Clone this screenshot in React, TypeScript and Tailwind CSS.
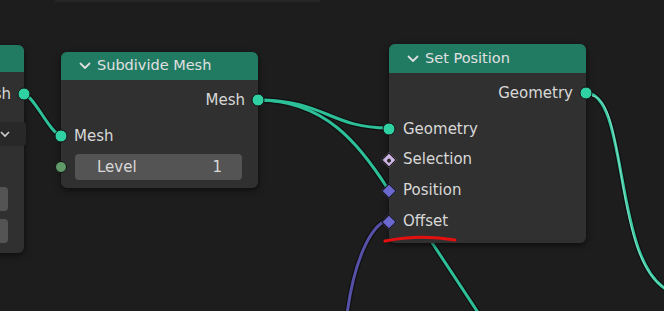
import React from "react";

const font = { fontFamily: '"DejaVu Sans", "Liberation Sans", sans-serif' };

function Circle({ side, color = "#2fd1a3", size = 13 }: { side: "l" | "r"; color?: string; size?: number }) {
  return (
    <span
      className={`absolute top-1/2 -translate-y-1/2 rounded-full border border-[#141414] ${side === "l" ? "-translate-x-1/2 left-0" : "translate-x-1/2 right-0"}`}
      style={{ width: size, height: size, background: color }}
    />
  );
}

function Diamond({ color, dot }: { color: string; dot?: boolean }) {
  return (
    <span className="absolute left-0 top-1/2 -translate-x-1/2 -translate-y-1/2 w-[11px] h-[11px] rotate-45 border border-[#141414] flex items-center justify-center" style={{ background: color }}>
      {dot && <span className="w-[4px] h-[4px] bg-[#2a2a2a] rounded-full" />}
    </span>
  );
}

function Chevron() {
  return (
    <svg width="12" height="8" viewBox="0 0 12 8" className="mr-[6px]">
      <path d="M1.5 1.5 L6 6 L10.5 1.5" fill="none" stroke="#dcdcdc" strokeWidth="1.8" strokeLinecap="round" strokeLinejoin="round" />
    </svg>
  );
}

function Header({ title, h }: { title: string; h: string }) {
  return (
    <div className={`${h} bg-[#217b63] rounded-t-[6px] flex items-center pl-[18px] text-[14.5px] text-[#e0e0e0]`}>
      <Chevron />
      <span>{title}</span>
    </div>
  );
}

export default function App() {
  return (
    <div className="relative w-[664px] h-[311px] overflow-hidden bg-[#1d1d1d]" style={font}>
      <div className="absolute left-[55px] top-0 w-[265px] h-[2px] bg-[#262626]" />
      {/* wires */}
      <svg className="absolute inset-0" width="664" height="311" viewBox="0 0 664 311">
        <g fill="none" stroke="#101010" strokeWidth="5.5" strokeLinecap="round">
          <path d="M24 94 C34 96 50 133 60 135" />
          <path d="M258 100 C325 100 330 128 388 128" />
          <path d="M258 100 C325 100 360 145 388 189" />
          <path d="M586 93 C630 93 612 270 672 292" />
          <path d="M425 232 L479 314" />
          <path d="M388 220 C370 225 354 262 347 314" />
        </g>
        <g fill="none" strokeWidth="3" strokeLinecap="round">
          <path d="M24 94 C34 96 50 133 60 135" stroke="#2dbf98" />
          <path d="M258 100 C325 100 330 128 388 128" stroke="#2dbf98" />
          <path d="M258 100 C325 100 360 145 388 189" stroke="#2dbf98" />
          <path d="M586 93 C630 93 612 270 672 292" stroke="#35c9a0" />
          <path d="M425 232 L479 314" stroke="#2dbf98" />
          <path d="M388 220 C370 225 354 262 347 314" stroke="#5651a6" />
        </g>
        <path d="M592 96 C628 100 612 262 668 290" fill="none" stroke="#bfe9dc" strokeWidth="1" opacity="0.6" />
      </svg>

      {/* left partial node */}
      <div className="absolute left-[-110px] top-[45px] w-[134px] h-[208px] rounded-[6px] bg-[#303030] shadow-[0_2px_6px_rgba(0,0,0,0.6)] text-[15px] text-[#d8d8d8]">
        <div className="h-[27px] bg-[#217b63] rounded-t-[6px]" />
        <div className="relative h-[30px] mt-[7px] flex items-center justify-end pr-[13px]">
          Mesh
          <Circle side="r" />
        </div>
        <div className="mt-[13px] ml-[10px] mr-[-2px] h-[24px] rounded-[4px] bg-[#282828] flex items-center justify-end pr-[16px]">
          <svg width="10" height="7" viewBox="0 0 10 7"><path d="M1 1 L5 5 L9 1" fill="none" stroke="#d0d0d0" strokeWidth="1.6" /></svg>
        </div>
        <div className="mt-[41px] ml-[10px] mr-[16px] h-[24px] rounded-[4px] bg-[#545454]" />
        <div className="mt-[8px] ml-[10px] mr-[16px] h-[24px] rounded-[4px] bg-[#545454]" />
      </div>

      {/* Subdivide Mesh */}
      <div className="absolute left-[61px] top-[52px] w-[197px] rounded-[6px] bg-[#303030] shadow-[0_2px_6px_rgba(0,0,0,0.6)] text-[15px] text-[#d8d8d8] pb-[6px]">
        <Header title="Subdivide Mesh" h="h-[28px]" />
        <div className="relative h-[30px] mt-[5px] flex items-center justify-end pr-[13px]">
          Mesh
          <Circle side="r" />
        </div>
        <div className="relative h-[30px] mt-[6px] flex items-center pl-[13px]">
          Mesh
          <Circle side="l" />
        </div>
        <div className="relative h-[30px] mt-[1px] flex items-center pl-[14px] pr-[16px]">
          <Circle side="l" color="#5f9a68" size={12} />
          <div className="flex-1 h-[26px] rounded-[4px] bg-[#545454] flex items-center justify-between pl-[22px] pr-[20px]">
            <span>Level</span>
            <span>1</span>
          </div>
        </div>
      </div>

      {/* Set Position */}
      <div className="absolute left-[389px] top-[44px] w-[197px] rounded-[6px] bg-[#303030] shadow-[0_2px_6px_rgba(0,0,0,0.6)] text-[15px] text-[#d8d8d8] pb-[6px]">
        <Header title="Set Position" h="h-[29px]" />
        <div className="relative h-[30px] mt-[5px] flex items-center justify-end pr-[13px]">
          Geometry
          <Circle side="r" />
        </div>
        <div className="relative h-[30px] mt-[6px] flex items-center pl-[14px]">
          Geometry
          <Circle side="l" />
        </div>
        <div className="relative h-[31px] flex items-center pl-[14px]">
          Selection
          <Diamond color="#cdb5e4" dot />
        </div>
        <div className="relative h-[31px] flex items-center pl-[14px]">
          Position
          <Diamond color="#6b68cf" />
        </div>
        <div className="relative h-[31px] flex items-center pl-[14px]">
          Offset
          <Diamond color="#6b68cf" />
        </div>
      </div>

      {/* red underline */}
      <svg className="absolute left-0 top-0" width="664" height="311" viewBox="0 0 664 311">
        <path d="M385 241 Q420 234 455 240" fill="none" stroke="#e4100f" strokeWidth="3" strokeLinecap="round" />
      </svg>
    </div>
  );
}
